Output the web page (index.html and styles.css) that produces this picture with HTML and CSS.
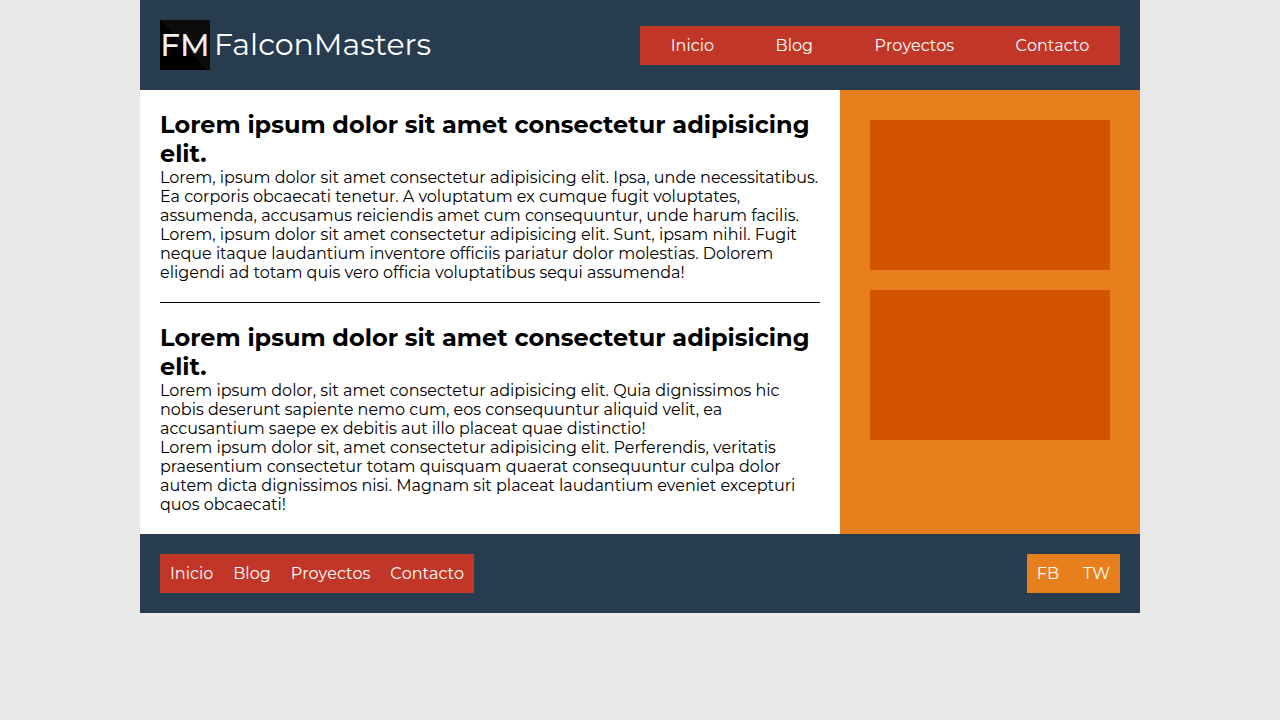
FILE: index.html
```html
<!DOCTYPE html>
<html lang="es">
<head>
<meta charset="utf-8">
<meta name="viewport" content="width=device-width, initial-scale=1">
<title>FalconMasters</title>
<link rel="stylesheet" href="styles.css">
</head>
<body>
<div class="page">
  <header class="header">
    <a class="brand" href="#">
      <svg class="brand-mark" viewBox="0 0 50 50" aria-hidden="true">
        <rect width="50" height="50" fill="#000"/>
        <path d="M0 0H50V50H47Z" fill="#0b0b0b"/>
        <text class="brand-initials" x="25" y="36" text-anchor="middle">FM</text>
      </svg>
      <span class="brand-name">FalconMasters</span>
    </a>
    <nav class="menu menu-main">
      <a href="#">Inicio</a>
      <a href="#">Blog</a>
      <a href="#">Proyectos</a>
      <a href="#">Contacto</a>
    </nav>
  </header>
  <div class="content">
    <main class="main">
      <article class="post">
        <h2>Lorem ipsum dolor sit amet consectetur adipisicing elit.</h2>
        <p>Lorem, ipsum dolor sit amet consectetur adipisicing elit. Ipsa, unde necessitatibus. Ea corporis obcaecati tenetur. A voluptatum ex cumque fugit voluptates, assumenda, accusamus reiciendis amet cum consequuntur, unde harum facilis.</p>
        <p>Lorem, ipsum dolor sit amet consectetur adipisicing elit. Sunt, ipsam nihil. Fugit neque itaque laudantium inventore officiis pariatur dolor molestias. Dolorem eligendi ad totam quis vero officia voluptatibus sequi assumenda!</p>
      </article>
      <article class="post">
        <h2>Lorem ipsum dolor sit amet consectetur adipisicing elit.</h2>
        <p>Lorem ipsum dolor, sit amet consectetur adipisicing elit. Quia dignissimos hic nobis deserunt sapiente nemo cum, eos consequuntur aliquid velit, ea accusantium saepe ex debitis aut illo placeat quae distinctio!</p>
        <p>Lorem ipsum dolor sit, amet consectetur adipisicing elit. Perferendis, veritatis praesentium consectetur totam quisquam quaerat consequuntur culpa dolor autem dicta dignissimos nisi. Magnam sit placeat laudantium eveniet excepturi quos obcaecati!</p>
      </article>
    </main>
    <aside class="sidebar">
      <div class="widget"></div>
      <div class="widget"></div>
    </aside>
  </div>
  <footer class="footer">
    <nav class="menu">
      <a href="#">Inicio</a>
      <a href="#">Blog</a>
      <a href="#">Proyectos</a>
      <a href="#">Contacto</a>
    </nav>
    <div class="menu menu-social">
      <a href="#">FB</a>
      <a href="#">TW</a>
    </div>
  </footer>
</div>
</body>
</html>
```
FILE: styles.css
```css
* { box-sizing: border-box; margin: 0; padding: 0; }

body {
  background: #e9e9e9;
  color: #000;
  font-family: Montserrat, Inter, "Open Sans", sans-serif;
  font-size: 16px;
  line-height: 19px;
}

a { color: #fff; text-decoration: none; }

.page { width: 100%; max-width: 1000px; margin: 0 auto; }

.header, .footer {
  display: flex;
  align-items: center;
  justify-content: space-between;
  padding: 20px;
  background: #283c50;
}

.brand { display: flex; align-items: center; gap: 4px; }
.brand-mark { width: 50px; height: 50px; }
.brand-initials { fill: #f0f0f0; font-size: 31px; font-weight: 500; }
.brand-name { font-size: 30px; line-height: 40px; }

.menu { display: flex; background: #c23628; font-kerning: none; }
.menu a { padding: 10px; text-align: center; }
.menu-main { width: 50%; }
.menu-main a { flex: 1 1 auto; }
.menu-social { gap: 4px; background: #e77f1c; }

.content { display: grid; grid-template-columns: 7fr 3fr; }
.main { padding: 20px; background: #fff; }
.post + .post { margin-top: 20px; padding-top: 20px; border-top: 1px solid #000; }
.post h2 { font-size: 24px; font-weight: 700; line-height: 29px; }

.sidebar {
  display: flex;
  flex-direction: column;
  gap: 20px;
  padding: 30px;
  background: #e77f1c;
}
.widget { height: 150px; background: #d35400; }
```
